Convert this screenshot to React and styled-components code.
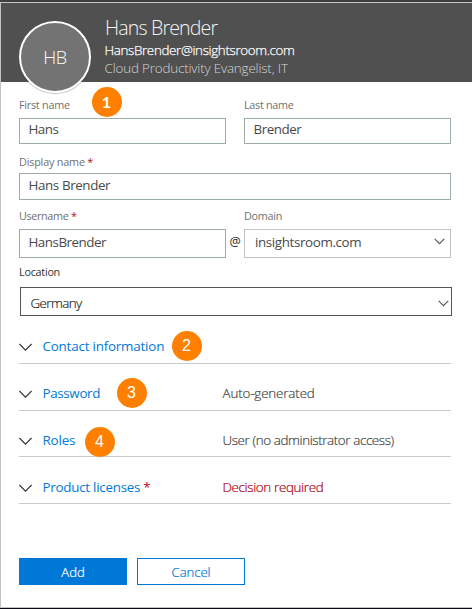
import React from 'react';
import styled, { createGlobalStyle } from 'styled-components';

const GlobalStyle = createGlobalStyle`
  * { box-sizing: border-box; }
  body { margin: 0; background: #fff; font-family: "Open Sans", "Noto Sans", sans-serif; }
`;

const Panel = styled.main`
  position: relative;
  width: 472px;
  height: 609px;
  border-top: 2px solid #3e3e3e;
  border-bottom: 1px solid #0b0a14;
  overflow: hidden;
`;

const Sheet = styled.div`
  height: 606px;
  border: 1px solid #c3c3c3;
  border-right: 0;
  background: #fff;
`;

const Header = styled.header`
  display: flex;
  height: 79px;
  padding-left: 18px;
  background: #505050;
`;

const Avatar = styled.div`
  display: flex;
  align-items: center;
  justify-content: center;
  flex: none;
  width: 72px;
  height: 72px;
  margin-top: 18px;
  border: 2px solid #fff;
  border-radius: 50%;
  background: #737373;
  box-shadow: 0 1px 1px rgba(0, 0, 0, 0.25);
  color: #fff;
  font-size: 18px;
  font-weight: 300;
  letter-spacing: -0.4px;
`;

const Identity = styled.div`
  padding: 11px 0 0 13.5px;
  white-space: nowrap;
`;

const FullName = styled.h1`
  margin: 0 0 0 0.5px;
  color: #f4f4f4;
  font-size: 19.6px;
  font-weight: 300;
  line-height: 27px;
  letter-spacing: -0.86px;
`;

const Email = styled.div`
  color: #fff;
  font-size: 13.4px;
  font-weight: 300;
  -webkit-text-stroke: 0.25px currentColor;
  line-height: 18px;
  letter-spacing: -0.35px;
`;

const JobTitle = styled.div`
  color: #d4d4d4;
  font-size: 13.4px;
  font-weight: 300;
  line-height: 18px;
  letter-spacing: -0.17px;
`;

const Form = styled.form`
  padding-left: 18px;
`;

const FieldRow = styled.div`
  display: flex;
  width: 432px;
  height: ${(p) => p.$height}px;
  padding-top: ${(p) => p.$top}px;
`;

const Field = styled.div`
  width: ${(p) => p.$width || 207}px;
`;

const Label = styled.div`
  height: ${(p) => p.$height || 20}px;
  color: ${(p) => (p.$dark ? '#333' : '#707070')};
  font-size: 10.8px;
  line-height: 14px;
  letter-spacing: ${(p) => p.$track}px;
  white-space: nowrap;
`;

const Required = styled.span`
  margin-left: ${(p) => p.$gap}px;
  color: #b80d1a;
`;

const Box = styled.div`
  display: flex;
  justify-content: space-between;
  width: 100%;
  height: ${(p) => p.$height}px;
  padding: ${(p) => p.$top}px ${(p) => p.$right || 0}px 0 ${(p) => p.$left || 8.5}px;
  border: 1px solid ${(p) => p.$border || '#9dacaa'};
  color: ${(p) => p.$color || '#4a4a4a'};
  font-size: 13.4px;
  font-weight: ${(p) => p.$weight || 400};
  line-height: 18px;
  letter-spacing: ${(p) => p.$track}px;
  white-space: nowrap;
`;

const Gap = styled.div`
  width: 18px;
  padding: ${(p) => p.$top || 0}px 0 0 3.5px;
  color: #222;
  font-size: 12.6px;
  line-height: 18px;
`;

const LocationField = styled.div`
  width: 433px;
  padding-top: 7px;
`;

const LocationBox = styled(Box)`
  width: 432px;
  margin-left: 1px;
  -webkit-text-stroke: 0.15px currentColor;
`;

const Sections = styled.div`
  width: 432px;
`;

const Section = styled.div`
  display: grid;
  grid-template-columns: 23.5px 180px 1fr;
  height: ${(p) => p.$height}px;
  padding-top: ${(p) => p.$top}px;
  border-bottom: 1px solid #c9c9c9;
  line-height: 18px;
  white-space: nowrap;
`;

const SectionTitle = styled.div`
  color: #0078d7;
  font-size: 13.4px;
  letter-spacing: ${(p) => p.$track}px;
`;

const SectionValue = styled.div`
  color: ${(p) => (p.$alert ? '#a80010' : '#444')};
  font-size: 13.4px;
  font-weight: 300;
  -webkit-text-stroke: 0.2px currentColor;
  letter-spacing: ${(p) => p.$track}px;
`;

const Actions = styled.div`
  display: flex;
  gap: 10px;
  padding-top: 54px;
`;

const Button = styled.button`
  width: 108px;
  height: 27px;
  padding: 0;
  border: 1px solid #0078d7;
  background: ${(p) => (p.$primary ? '#0078d7' : '#fff')};
  color: ${(p) => (p.$primary ? '#fff' : '#0078d7')};
  font-family: inherit;
  font-size: 13.2px;
  letter-spacing: -0.1px;
  font-weight: 300;
  -webkit-text-stroke: 0.2px currentColor;
  line-height: 18px;
`;

const Badge = styled.span`
  position: absolute;
  left: ${(p) => p.$x}px;
  top: ${(p) => p.$y}px;
  width: 30px;
  height: 30px;
  border-radius: 50%;
  background: #ff8000;
  color: #fff;
  font-family: ${(p) => (p.$footed ? 'Lato' : '"Liberation Sans"')}, sans-serif;
  font-size: 16px;
  font-weight: ${(p) => (p.$footed ? 700 : 400)};
  line-height: 29px;
  text-align: center;
`;

const Icon = styled.svg`
  display: block;
  flex: none;
  margin-top: ${(p) => p.$top || 0}px;
  fill: none;
  stroke: ${(p) => p.$color || '#333'};
  stroke-width: 1.1;
`;

const SmallChevron = ({ top }) => (
  <Icon $top={top} $color="#555" width="11" height="7" viewBox="0 0 11 7">
    <path d="M.7.8 5.5 5.6 10.3.8" />
  </Icon>
);

const LargeChevron = () => (
  <Icon $top={6} width="14" height="9" viewBox="0 0 14 9">
    <path d="M.4 1 6.5 7.1 12.6 1" />
  </Icon>
);

const sections = [
  { title: 'Contact information', track: -0.2, height: 48, top: 21 },
  { title: 'Password', track: -0.35, height: 47, top: 20, value: 'Auto-generated', valueTrack: -0.15 },
  { title: 'Roles', track: -0.15, height: 46, top: 20, value: 'User (no administrator access)', valueTrack: -0.39 },
  { title: 'Product licenses', track: -0.26, height: 47, top: 21, value: 'Decision required', valueTrack: -0.35, alert: true },
];

const badges = [
  { n: 1, x: 91.5, y: 84.5, footed: true },
  { n: 2, x: 171.5, y: 328.5 },
  { n: 3, x: 116.5, y: 375.5 },
  { n: 4, x: 84.5, y: 424.5 },
];

export default function App() {
  return (
    <>
      <GlobalStyle />
      <Panel>
        <Sheet>
          <Header>
            <Avatar>HB</Avatar>
            <Identity>
              <FullName>Hans Brender</FullName>
              <Email>HansBrender@insightsroom.com</Email>
              <JobTitle>Cloud Productivity Evangelist, IT</JobTitle>
            </Identity>
          </Header>
          <Form onSubmit={(e) => e.preventDefault()}>
            <FieldRow $height={62} $top={16}>
              <Field>
                <Label $track={-0.25}>First name</Label>
                <Box $height={26} $top={1} $track={-0.55}>Hans</Box>
              </Field>
              <Gap />
              <Field>
                <Label $track={-0.3}>Last name</Label>
                <Box $height={26} $top={1} $track={-0.45}>Brender</Box>
              </Field>
            </FieldRow>
            <FieldRow $height={56} $top={11}>
              <Field $width={432}>
                <Label $height={18} $track={-0.18}>Display name<Required $gap={2.5}>*</Required></Label>
                <Box $height={27} $top={2} $track={-0.4}>Hans Brender</Box>
              </Field>
            </FieldRow>
            <FieldRow $height={58} $top={9}>
              <Field>
                <Label $track={-0.35}>Username<Required $gap={2.5}>*</Required></Label>
                <Box $height={29} $top={3} $track={-0.5}>HansBrender</Box>
              </Field>
              <Gap $top={24}>@</Gap>
              <Field>
                <Label $track={-0.25}>Domain</Label>
                <Box $height={29} $top={3} $left={10} $right={5} $border="#c2c2c2" $track={-0.38}>
                  insightsroom.com
                  <SmallChevron top={5} />
                </Box>
              </Field>
            </FieldRow>
            <LocationField>
              <Label $dark $height={22} $track={-0.25}>Location</Label>
              <LocationBox $height={29} $top={6} $left={9.5} $right={2} $border="#555" $color="#111" $weight={300} $track={-0.6}>
                Germany
                <SmallChevron top={6} />
              </LocationBox>
            </LocationField>
            <Sections>
              {sections.map((s) => (
                <Section key={s.title} $height={s.height} $top={s.top}>
                  <LargeChevron />
                  <SectionTitle $track={s.track}>
                    {s.title}
                    {s.alert && <Required $gap={3}>*</Required>}
                  </SectionTitle>
                  {s.value && (
                    <SectionValue $track={s.valueTrack} $alert={s.alert}>{s.value}</SectionValue>
                  )}
                </Section>
              ))}
            </Sections>
            <Actions>
              <Button type="submit" $primary>Add</Button>
              <Button type="button">Cancel</Button>
            </Actions>
          </Form>
        </Sheet>
        {badges.map((b) => (
          <Badge key={b.n} $x={b.x} $y={b.y} $footed={b.footed}>{b.n}</Badge>
        ))}
      </Panel>
    </>
  );
}
